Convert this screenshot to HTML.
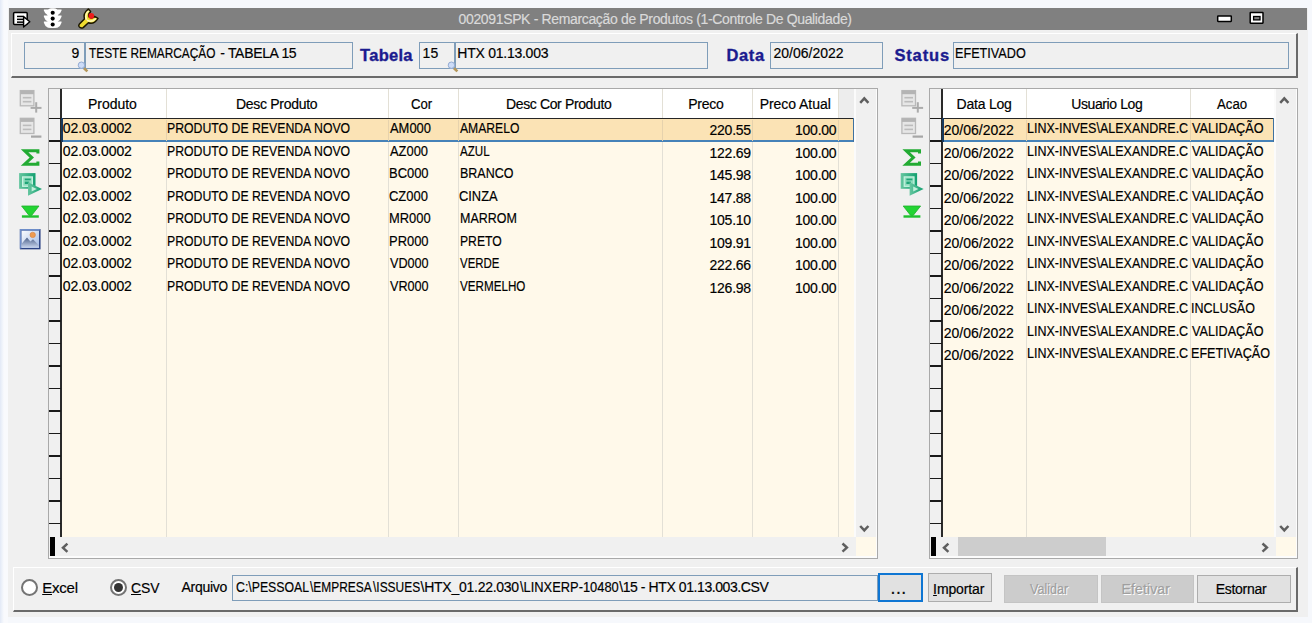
<!DOCTYPE html><html lang="pt-BR"><head><meta charset="utf-8"><title>002091SPK - Remarcação de Produtos</title><style>
*{box-sizing:border-box;margin:0;padding:0}
html,body{width:1312px;height:623px;overflow:hidden}
body{background:#f6f8fc;font-family:"Liberation Sans",sans-serif;font-size:14px;color:#000;position:relative}
.a{position:absolute}
.t{position:absolute;white-space:nowrap;line-height:16px;height:16px;-webkit-text-stroke:0.18px}
.b{font-weight:bold;color:#1b1b8f;-webkit-text-stroke:0.35px}
#edge{left:0;top:0;width:8px;height:623px;background:linear-gradient(90deg,#e2e9f6 0,#eef2fa 2px,#f9fafd 4px,#f9fafd 100%)}
#main{left:8px;top:8px;width:1300px;height:609px;background:#f0f0f0}
#tb{left:9px;top:8px;width:1298px;height:22px;background:#808080}
.panel{position:absolute;background:#f0f0f0;border-top:1px solid #fff;border-left:1px solid #fff;border-right:2px solid #6a6a6a;border-bottom:2px solid #6a6a6a}
.in{position:absolute;top:42px;height:27px;border:1px solid #7f9db9;background:#f0f0f0}
.grid{position:absolute;border:1px solid #a9a9a9;background:#fff9ea;overflow:hidden}
.hd{position:absolute;background:#fff}
.vl{position:absolute;width:1px;background:#e3e0d6}
.hl{position:absolute;height:1px;background:#1a1a1a}
.btn{position:absolute;top:574px;height:28px;border:1px solid #adadad;background:#e1e1e1}
</style></head><body>
<div class="a" id="edge"></div>
<div class="a" id="main"></div>
<div class="a" id="tb"></div>
<div class="panel" style="left:11px;top:33px;width:1287px;height:45px"></div>
<div class="in" style="left:24px;width:61px"></div>
<div class="in" style="left:85px;width:268px"></div>
<div class="in" style="left:419px;width:36px"></div>
<div class="in" style="left:455px;width:253px"></div>
<div class="in" style="left:770px;width:113px"></div>
<div class="in" style="left:953px;width:336px"></div>
<div class="grid" style="left:48px;top:88px;width:830px;height:471px">
<div class="hd" style="left:12px;top:0;width:777.5px;height:29.5px"></div>
<div class="a" style="left:789.5px;top:0;width:15.5px;height:29.5px;background:#ededed"></div>
<div class="a" style="left:0;top:0;width:12px;height:448.20000000000005px;background:#f0f0f0"></div>
<div class="a" style="left:10.6px;top:0;width:0.9px;height:448.20000000000005px;background:#b5b5b5"></div>
<div class="a" style="left:11.3px;top:0;width:1.7px;height:448.20000000000005px;background:#2a2a2a"></div>
<div class="vl" style="left:116.5px;top:0;height:448.20000000000005px"></div>
<div class="vl" style="left:339.0px;top:0;height:448.20000000000005px"></div>
<div class="vl" style="left:409.2px;top:0;height:448.20000000000005px"></div>
<div class="vl" style="left:613.0px;top:0;height:448.20000000000005px"></div>
<div class="vl" style="left:703.0px;top:0;height:448.20000000000005px"></div>
<div class="vl" style="left:789.0px;top:0;height:448.20000000000005px"></div>
<div class="a" style="left:12.2px;top:28.6px;width:792.8px;height:24.1px;background:#fbe3b5"></div>
<div class="a" style="left:12.2px;top:28.6px;width:792.8px;height:1.7px;background:#262626"></div>
<div class="a" style="left:12.2px;top:50.6px;width:792.8px;height:2.1px;background:#4682b8"></div>
<div class="a" style="left:803.7px;top:28.6px;width:1.3px;height:24.1px;background:#3f719f"></div>
<div class="a" style="left:12.2px;top:28.6px;width:2px;height:24.1px;background:#17395e"></div>
<div class="a" style="left:116.5px;top:30.5px;height:21.0px;width:1px;background:#e6d2ad"></div>
<div class="a" style="left:339.0px;top:30.5px;height:21.0px;width:1px;background:#e6d2ad"></div>
<div class="a" style="left:409.2px;top:30.5px;height:21.0px;width:1px;background:#e6d2ad"></div>
<div class="a" style="left:613.0px;top:30.5px;height:21.0px;width:1px;background:#e6d2ad"></div>
<div class="a" style="left:703.0px;top:30.5px;height:21.0px;width:1px;background:#e6d2ad"></div>
<div class="a" style="left:789.0px;top:30.5px;height:21.0px;width:1px;background:#e6d2ad"></div>
<div class="hl" style="left:0;top:28.8px;width:12px;height:1.6px"></div>
<div class="hl" style="left:0;top:51.3px;width:12px;height:1.6px"></div>
<div class="hl" style="left:0;top:73.8px;width:12px;height:1.6px"></div>
<div class="hl" style="left:0;top:96.3px;width:12px;height:1.6px"></div>
<div class="hl" style="left:0;top:118.8px;width:12px;height:1.6px"></div>
<div class="hl" style="left:0;top:141.3px;width:12px;height:1.6px"></div>
<div class="hl" style="left:0;top:163.8px;width:12px;height:1.6px"></div>
<div class="hl" style="left:0;top:186.3px;width:12px;height:1.6px"></div>
<div class="hl" style="left:0;top:208.8px;width:12px;height:1.6px"></div>
<div class="hl" style="left:0;top:231.3px;width:12px;height:1.6px"></div>
<div class="hl" style="left:0;top:253.8px;width:12px;height:1.6px"></div>
<div class="hl" style="left:0;top:276.3px;width:12px;height:1.6px"></div>
<div class="hl" style="left:0;top:298.8px;width:12px;height:1.6px"></div>
<div class="hl" style="left:0;top:321.3px;width:12px;height:1.6px"></div>
<div class="hl" style="left:0;top:343.8px;width:12px;height:1.6px"></div>
<div class="hl" style="left:0;top:366.3px;width:12px;height:1.6px"></div>
<div class="hl" style="left:0;top:388.8px;width:12px;height:1.6px"></div>
<div class="hl" style="left:0;top:411.3px;width:12px;height:1.6px"></div>
<div class="hl" style="left:0;top:433.8px;width:12px;height:1.6px"></div>
<div class="a" style="left:805px;top:0;width:1.5px;height:469px;background:#fbfbfb"></div>
<div class="a" style="left:806.5px;top:0;width:20px;height:448.20000000000005px;background:#f0f0f0"></div>
<div class="a" style="left:826.5px;top:0;width:3px;height:469px;background:#fcfcfc"></div>
<div class="a" style="left:0;top:448.20000000000005px;width:806.5px;height:19.2px;background:#f0f0f0"></div>
<div class="a" style="left:0;top:467.40000000000003px;width:828px;height:3px;background:#fcfcfc"></div>
<div class="a" style="left:1.3px;top:447.80000000000007px;width:4.9px;height:19.4px;background:#000"></div>
</div>
<div class="grid" style="left:929px;top:88px;width:369px;height:471px">
<div class="hd" style="left:12px;top:0;width:332px;height:29.5px"></div>
<div class="a" style="left:344px;top:0;width:0px;height:29.5px;background:#ededed"></div>
<div class="a" style="left:0;top:0;width:12px;height:448.20000000000005px;background:#f0f0f0"></div>
<div class="a" style="left:10.6px;top:0;width:0.9px;height:448.20000000000005px;background:#b5b5b5"></div>
<div class="a" style="left:11.3px;top:0;width:1.7px;height:448.20000000000005px;background:#2a2a2a"></div>
<div class="vl" style="left:95.70000000000005px;top:0;height:448.20000000000005px"></div>
<div class="vl" style="left:259.5px;top:0;height:448.20000000000005px"></div>
<div class="vl" style="left:343.5px;top:0;height:448.20000000000005px"></div>
<div class="a" style="left:12.2px;top:28.6px;width:331.8px;height:24.1px;background:#fbe3b5"></div>
<div class="a" style="left:12.2px;top:28.6px;width:331.8px;height:1.7px;background:#262626"></div>
<div class="a" style="left:12.2px;top:50.6px;width:331.8px;height:2.1px;background:#4682b8"></div>
<div class="a" style="left:342.7px;top:28.6px;width:1.3px;height:24.1px;background:#3f719f"></div>
<div class="a" style="left:12.2px;top:28.6px;width:2px;height:24.1px;background:#17395e"></div>
<div class="a" style="left:95.70000000000005px;top:30.5px;height:21.0px;width:1px;background:#e6d2ad"></div>
<div class="a" style="left:259.5px;top:30.5px;height:21.0px;width:1px;background:#e6d2ad"></div>
<div class="a" style="left:343.5px;top:30.5px;height:21.0px;width:1px;background:#e6d2ad"></div>
<div class="hl" style="left:0;top:28.8px;width:12px;height:1.6px"></div>
<div class="hl" style="left:0;top:51.3px;width:12px;height:1.6px"></div>
<div class="hl" style="left:0;top:73.8px;width:12px;height:1.6px"></div>
<div class="hl" style="left:0;top:96.3px;width:12px;height:1.6px"></div>
<div class="hl" style="left:0;top:118.8px;width:12px;height:1.6px"></div>
<div class="hl" style="left:0;top:141.3px;width:12px;height:1.6px"></div>
<div class="hl" style="left:0;top:163.8px;width:12px;height:1.6px"></div>
<div class="hl" style="left:0;top:186.3px;width:12px;height:1.6px"></div>
<div class="hl" style="left:0;top:208.8px;width:12px;height:1.6px"></div>
<div class="hl" style="left:0;top:231.3px;width:12px;height:1.6px"></div>
<div class="hl" style="left:0;top:253.8px;width:12px;height:1.6px"></div>
<div class="hl" style="left:0;top:276.3px;width:12px;height:1.6px"></div>
<div class="hl" style="left:0;top:298.8px;width:12px;height:1.6px"></div>
<div class="hl" style="left:0;top:321.3px;width:12px;height:1.6px"></div>
<div class="hl" style="left:0;top:343.8px;width:12px;height:1.6px"></div>
<div class="hl" style="left:0;top:366.3px;width:12px;height:1.6px"></div>
<div class="hl" style="left:0;top:388.8px;width:12px;height:1.6px"></div>
<div class="hl" style="left:0;top:411.3px;width:12px;height:1.6px"></div>
<div class="hl" style="left:0;top:433.8px;width:12px;height:1.6px"></div>
<div class="a" style="left:344px;top:0;width:1.5px;height:469px;background:#fbfbfb"></div>
<div class="a" style="left:345.5px;top:0;width:20px;height:448.20000000000005px;background:#f0f0f0"></div>
<div class="a" style="left:365.5px;top:0;width:3px;height:469px;background:#fcfcfc"></div>
<div class="a" style="left:0;top:448.20000000000005px;width:345.5px;height:19.2px;background:#f0f0f0"></div>
<div class="a" style="left:0;top:467.40000000000003px;width:367px;height:3px;background:#fcfcfc"></div>
<div class="a" style="left:1.3px;top:447.80000000000007px;width:4.9px;height:19.4px;background:#000"></div>
<div class="a" style="left:28px;top:448.20000000000005px;width:148px;height:19.2px;background:#cdcdcd"></div>
</div>
<div class="panel" style="left:13px;top:567px;width:1285px;height:45px"></div>
<div class="in" style="left:232px;top:575px;width:646px;height:26px"></div>
<div class="a" style="left:878px;top:573.4px;width:44.8px;height:28.4px;background:#e1e1e1;border:2.3px solid #0f76d3"></div>
<div class="a" style="left:928px;top:573.4px;width:63.8px;height:28.4px;background:#e1e1e1;border:1.2px solid #adadad"></div>
<div class="a" style="left:1004px;top:574.6px;width:93.6px;height:28.4px;background:#cccccc;border:1px solid #c4c4c4"></div>
<div class="a" style="left:1101px;top:574.6px;width:93.2px;height:28.4px;background:#cccccc;border:1px solid #c4c4c4"></div>
<div class="a" style="left:1197px;top:574.6px;width:93.6px;height:28.4px;background:#e1e1e1;border:1.2px solid #adadad"></div>
<div class="a" style="left:21.3px;top:579px;width:17px;height:17px;border-radius:50%;background:#fff;border:2px solid #747474"></div>
<div class="a" style="left:109.9px;top:579px;width:17px;height:17px;border-radius:50%;background:#fff;border:2px solid #747474"></div>
<div class="a" style="left:113.9px;top:583px;width:9px;height:9px;border-radius:50%;background:#333"></div>
<div class="t" style="left:458.50px;top:11.00px;color:#dadada;letter-spacing:-0.347px;">002091SPK - Remarcação de Produtos (1-Controle De Qualidade)</div>
<div class="t" style="left:71.50px;top:45.00px;letter-spacing:1.100px;">9</div>
<div class="t" style="left:0;top:45.00px;width:1312px;"><span class="a" style="left:88.50px;top:0;transform:scaleX(0.8463);transform-origin:0 0;">TESTE REMARCAÇÃO</span> <span class="a" style="left:220.30px;top:0;letter-spacing:-0.330px;">- TABELA 15</span></div>
<div class="t" style="left:422.60px;top:45.00px;letter-spacing:0.000px;">15</div>
<div class="t" style="left:457.30px;top:45.00px;letter-spacing:-0.250px;">HTX 01.13.003</div>
<div class="t" style="left:773.40px;top:45.00px;letter-spacing:0.022px;">20/06/2022</div>
<div class="t" style="left:955.40px;top:45.00px;transform:scaleX(0.9039);transform-origin:0 0;">EFETIVADO</div>
<div class="t b" style="left:360.00px;top:46.83px;letter-spacing:0.300px;font-size:16.5px;">Tabela</div>
<div class="t b" style="left:726.40px;top:46.83px;letter-spacing:0.667px;font-size:16.5px;">Data</div>
<div class="t b" style="left:894.40px;top:46.83px;letter-spacing:0.860px;font-size:16.5px;">Status</div>
<div class="t" style="left:88.00px;top:95.90px;letter-spacing:-0.033px;">Produto</div>
<div class="t" style="left:236.00px;top:95.90px;letter-spacing:-0.300px;">Desc Produto</div>
<div class="t" style="left:411.36px;top:95.90px;transform:scaleX(0.9409);transform-origin:0 0;">Cor</div>
<div class="t" style="left:506.00px;top:95.90px;letter-spacing:-0.367px;">Desc Cor Produto</div>
<div class="t" style="left:688.30px;top:95.90px;letter-spacing:-0.275px;">Preco</div>
<div class="t" style="left:759.70px;top:95.90px;letter-spacing:-0.050px;">Preco Atual</div>
<div class="t" style="left:956.60px;top:95.90px;letter-spacing:-0.229px;">Data Log</div>
<div class="t" style="left:1071.20px;top:95.90px;letter-spacing:-0.390px;">Usuario Log</div>
<div class="t" style="left:1216.50px;top:95.90px;transform:scaleX(0.9452);transform-origin:0 0;">Acao</div>
<div class="t" style="left:62.80px;top:120.00px;letter-spacing:-0.111px;">02.03.0002</div>
<div class="t" style="left:166.62px;top:120.00px;transform:scaleX(0.8763);transform-origin:0 0;">PRODUTO DE REVENDA NOVO</div>
<div class="t" style="left:390.30px;top:120.00px;transform:scaleX(0.9227);transform-origin:0 0;">AM000</div>
<div class="t" style="left:460.40px;top:120.00px;transform:scaleX(0.8676);transform-origin:0 0;">AMARELO</div>
<div class="t" style="right:561.25px;top:122.20px;letter-spacing:-0.28px;">220.55</div>
<div class="t" style="right:475.75px;top:122.20px;letter-spacing:-0.28px;">100.00</div>
<div class="t" style="left:62.80px;top:142.50px;letter-spacing:-0.111px;">02.03.0002</div>
<div class="t" style="left:166.62px;top:142.50px;transform:scaleX(0.8763);transform-origin:0 0;">PRODUTO DE REVENDA NOVO</div>
<div class="t" style="left:390.30px;top:142.50px;transform:scaleX(0.9220);transform-origin:0 0;">AZ000</div>
<div class="t" style="left:460.40px;top:142.50px;transform:scaleX(0.8278);transform-origin:0 0;">AZUL</div>
<div class="t" style="right:561.25px;top:144.70px;letter-spacing:-0.28px;">122.69</div>
<div class="t" style="right:475.75px;top:144.70px;letter-spacing:-0.28px;">100.00</div>
<div class="t" style="left:62.80px;top:165.00px;letter-spacing:-0.111px;">02.03.0002</div>
<div class="t" style="left:166.62px;top:165.00px;transform:scaleX(0.8763);transform-origin:0 0;">PRODUTO DE REVENDA NOVO</div>
<div class="t" style="left:389.38px;top:165.00px;transform:scaleX(0.9244);transform-origin:0 0;">BC000</div>
<div class="t" style="left:459.51px;top:165.00px;transform:scaleX(0.8914);transform-origin:0 0;">BRANCO</div>
<div class="t" style="right:561.25px;top:167.20px;letter-spacing:-0.28px;">145.98</div>
<div class="t" style="right:475.75px;top:167.20px;letter-spacing:-0.28px;">100.00</div>
<div class="t" style="left:62.80px;top:187.50px;letter-spacing:-0.111px;">02.03.0002</div>
<div class="t" style="left:166.62px;top:187.50px;transform:scaleX(0.8763);transform-origin:0 0;">PRODUTO DE REVENDA NOVO</div>
<div class="t" style="left:389.38px;top:187.50px;transform:scaleX(0.9244);transform-origin:0 0;">CZ000</div>
<div class="t" style="left:459.48px;top:187.50px;transform:scaleX(0.9195);transform-origin:0 0;">CINZA</div>
<div class="t" style="right:561.25px;top:189.70px;letter-spacing:-0.28px;">147.88</div>
<div class="t" style="right:475.75px;top:189.70px;letter-spacing:-0.28px;">100.00</div>
<div class="t" style="left:62.80px;top:210.00px;letter-spacing:-0.111px;">02.03.0002</div>
<div class="t" style="left:166.62px;top:210.00px;transform:scaleX(0.8763);transform-origin:0 0;">PRODUTO DE REVENDA NOVO</div>
<div class="t" style="left:389.38px;top:210.00px;transform:scaleX(0.9227);transform-origin:0 0;">MR000</div>
<div class="t" style="left:459.51px;top:210.00px;transform:scaleX(0.8903);transform-origin:0 0;">MARROM</div>
<div class="t" style="right:561.25px;top:212.20px;letter-spacing:-0.28px;">105.10</div>
<div class="t" style="right:475.75px;top:212.20px;letter-spacing:-0.28px;">100.00</div>
<div class="t" style="left:62.80px;top:232.50px;letter-spacing:-0.111px;">02.03.0002</div>
<div class="t" style="left:166.62px;top:232.50px;transform:scaleX(0.8763);transform-origin:0 0;">PRODUTO DE REVENDA NOVO</div>
<div class="t" style="left:389.38px;top:232.50px;transform:scaleX(0.9244);transform-origin:0 0;">PR000</div>
<div class="t" style="left:459.53px;top:232.50px;transform:scaleX(0.8696);transform-origin:0 0;">PRETO</div>
<div class="t" style="right:561.25px;top:234.70px;letter-spacing:-0.28px;">109.91</div>
<div class="t" style="right:475.75px;top:234.70px;letter-spacing:-0.28px;">100.00</div>
<div class="t" style="left:62.80px;top:255.00px;letter-spacing:-0.111px;">02.03.0002</div>
<div class="t" style="left:166.62px;top:255.00px;transform:scaleX(0.8763);transform-origin:0 0;">PRODUTO DE REVENDA NOVO</div>
<div class="t" style="left:390.30px;top:255.00px;transform:scaleX(0.9024);transform-origin:0 0;">VD000</div>
<div class="t" style="left:460.40px;top:255.00px;transform:scaleX(0.8167);transform-origin:0 0;">VERDE</div>
<div class="t" style="right:561.25px;top:257.20px;letter-spacing:-0.28px;">222.66</div>
<div class="t" style="right:475.75px;top:257.20px;letter-spacing:-0.28px;">100.00</div>
<div class="t" style="left:62.80px;top:277.50px;letter-spacing:-0.111px;">02.03.0002</div>
<div class="t" style="left:166.62px;top:277.50px;transform:scaleX(0.8763);transform-origin:0 0;">PRODUTO DE REVENDA NOVO</div>
<div class="t" style="left:390.30px;top:277.50px;transform:scaleX(0.9024);transform-origin:0 0;">VR000</div>
<div class="t" style="left:460.40px;top:277.50px;transform:scaleX(0.8321);transform-origin:0 0;">VERMELHO</div>
<div class="t" style="right:561.25px;top:279.70px;letter-spacing:-0.28px;">126.98</div>
<div class="t" style="right:475.75px;top:279.70px;letter-spacing:-0.28px;">100.00</div>
<div class="t" style="left:943.80px;top:122.20px;letter-spacing:-0.011px;">20/06/2022</div>
<div class="t" style="left:1026.91px;top:120.00px;transform:scaleX(0.8927);transform-origin:0 0;">LINX-INVES\ALEXANDRE.C</div>
<div class="t" style="left:1191.90px;top:120.00px;transform:scaleX(0.9038);transform-origin:0 0;">VALIDAÇÃO</div>
<div class="t" style="left:943.80px;top:144.70px;letter-spacing:-0.011px;">20/06/2022</div>
<div class="t" style="left:1026.91px;top:142.50px;transform:scaleX(0.8927);transform-origin:0 0;">LINX-INVES\ALEXANDRE.C</div>
<div class="t" style="left:1191.90px;top:142.50px;transform:scaleX(0.9038);transform-origin:0 0;">VALIDAÇÃO</div>
<div class="t" style="left:943.80px;top:167.20px;letter-spacing:-0.011px;">20/06/2022</div>
<div class="t" style="left:1026.91px;top:165.00px;transform:scaleX(0.8927);transform-origin:0 0;">LINX-INVES\ALEXANDRE.C</div>
<div class="t" style="left:1191.90px;top:165.00px;transform:scaleX(0.9038);transform-origin:0 0;">VALIDAÇÃO</div>
<div class="t" style="left:943.80px;top:189.70px;letter-spacing:-0.011px;">20/06/2022</div>
<div class="t" style="left:1026.91px;top:187.50px;transform:scaleX(0.8927);transform-origin:0 0;">LINX-INVES\ALEXANDRE.C</div>
<div class="t" style="left:1191.90px;top:187.50px;transform:scaleX(0.9038);transform-origin:0 0;">VALIDAÇÃO</div>
<div class="t" style="left:943.80px;top:212.20px;letter-spacing:-0.011px;">20/06/2022</div>
<div class="t" style="left:1026.91px;top:210.00px;transform:scaleX(0.8927);transform-origin:0 0;">LINX-INVES\ALEXANDRE.C</div>
<div class="t" style="left:1191.90px;top:210.00px;transform:scaleX(0.9038);transform-origin:0 0;">VALIDAÇÃO</div>
<div class="t" style="left:943.80px;top:234.70px;letter-spacing:-0.011px;">20/06/2022</div>
<div class="t" style="left:1026.91px;top:232.50px;transform:scaleX(0.8927);transform-origin:0 0;">LINX-INVES\ALEXANDRE.C</div>
<div class="t" style="left:1191.90px;top:232.50px;transform:scaleX(0.9038);transform-origin:0 0;">VALIDAÇÃO</div>
<div class="t" style="left:943.80px;top:257.20px;letter-spacing:-0.011px;">20/06/2022</div>
<div class="t" style="left:1026.91px;top:255.00px;transform:scaleX(0.8927);transform-origin:0 0;">LINX-INVES\ALEXANDRE.C</div>
<div class="t" style="left:1191.90px;top:255.00px;transform:scaleX(0.9038);transform-origin:0 0;">VALIDAÇÃO</div>
<div class="t" style="left:943.80px;top:279.70px;letter-spacing:-0.011px;">20/06/2022</div>
<div class="t" style="left:1026.91px;top:277.50px;transform:scaleX(0.8927);transform-origin:0 0;">LINX-INVES\ALEXANDRE.C</div>
<div class="t" style="left:1191.90px;top:277.50px;transform:scaleX(0.9038);transform-origin:0 0;">VALIDAÇÃO</div>
<div class="t" style="left:943.80px;top:302.20px;letter-spacing:-0.011px;">20/06/2022</div>
<div class="t" style="left:1026.91px;top:300.00px;transform:scaleX(0.8927);transform-origin:0 0;">LINX-INVES\ALEXANDRE.C</div>
<div class="t" style="left:1191.01px;top:300.00px;transform:scaleX(0.8929);transform-origin:0 0;">INCLUSÃO</div>
<div class="t" style="left:943.80px;top:324.70px;letter-spacing:-0.011px;">20/06/2022</div>
<div class="t" style="left:1026.91px;top:322.50px;transform:scaleX(0.8927);transform-origin:0 0;">LINX-INVES\ALEXANDRE.C</div>
<div class="t" style="left:1191.90px;top:322.50px;transform:scaleX(0.9038);transform-origin:0 0;">VALIDAÇÃO</div>
<div class="t" style="left:943.80px;top:347.20px;letter-spacing:-0.011px;">20/06/2022</div>
<div class="t" style="left:1026.91px;top:345.00px;transform:scaleX(0.8927);transform-origin:0 0;">LINX-INVES\ALEXANDRE.C</div>
<div class="t" style="left:1191.00px;top:345.00px;transform:scaleX(0.9012);transform-origin:0 0;">EFETIVAÇÃO</div>
<div class="t" style="left:42.20px;top:579.75px;letter-spacing:-0.200px;font-size:15px;"><u>E</u>xcel</div>
<div class="t" style="left:131.20px;top:579.75px;transform:scaleX(0.9290);transform-origin:0 0;font-size:15px;"><u>C</u>SV</div>
<div class="t" style="left:181.50px;top:578.70px;letter-spacing:-0.283px;">Arquivo</div>
<div class="t" style="left:0;top:578.70px;width:1312px;"><span class="a" style="left:235.72px;top:0;transform:scaleX(0.8780);transform-origin:0 0;">C:\PESSOAL</span><span class="a" style="left:310.40px;top:0;transform:scaleX(0.8528);transform-origin:0 0;">\EMPRESA</span><span class="a" style="left:373.20px;top:0;transform:scaleX(0.8527);transform-origin:0 0;">\ISSUES</span><span class="a" style="left:420.60px;top:0;letter-spacing:-0.262px;">\HTX_01.22.030</span><span class="a" style="left:520.00px;top:0;transform:scaleX(0.9196);transform-origin:0 0;">\LINXERP-10480</span><span class="a" style="left:619.20px;top:0;letter-spacing:-0.418px;">\15 - HTX 01.13.003.CSV</span></div>
<div class="t b" style="left:891.00px;top:580.60px;color:#111;-webkit-text-stroke:0;letter-spacing:1.500px;">...</div>
<div class="t" style="left:933.10px;top:580.70px;letter-spacing:-0.114px;"><u>I</u>mportar</div>
<div class="t" style="left:1030.40px;top:581.40px;color:#9f9f9f;text-shadow:1px 1px 0 #fff;transform:scaleX(0.8977);transform-origin:0 0;">Validar</div>
<div class="t" style="left:1121.60px;top:581.40px;color:#9f9f9f;text-shadow:1px 1px 0 #fff;letter-spacing:0.114px;">Efetivar</div>
<div class="t" style="left:1215.70px;top:581.40px;letter-spacing:-0.286px;">Estornar</div>
<svg class="a" style="left:0;top:0" width="1312" height="623" viewBox="0 0 1312 623"><defs><linearGradient id="dg" x1="0" y1="0" x2="1" y2="0"><stop offset="0" stop-color="#66c6a0"/><stop offset="1" stop-color="#12a070"/></linearGradient></defs>
<g transform="translate(0,0)">
<g transform="translate(0,0)">
<rect x="20.3" y="90.6" width="13.6" height="15.2" fill="#e6e6e6" stroke="#b9b9b9" stroke-width="1.3"/>
<rect x="20.3" y="90.6" width="13.6" height="3.6" fill="#b4b4b4"/>
<rect x="22.8" y="96.9" width="8.6" height="1.6" fill="#bcbcbc"/>
<rect x="22.8" y="100.9" width="8.6" height="1.6" fill="#bcbcbc"/>
<rect x="30.6" y="106.9" width="10.9" height="2" fill="#ababab"/>
<rect x="35.2" y="102.2" width="2" height="10.4" fill="#ababab"/>
</g>
<g transform="translate(0,27.7)">
<rect x="20.3" y="90.6" width="13.6" height="15.2" fill="#e6e6e6" stroke="#b9b9b9" stroke-width="1.3"/>
<rect x="20.3" y="90.6" width="13.6" height="3.6" fill="#b4b4b4"/>
<rect x="22.8" y="96.9" width="8.6" height="1.6" fill="#bcbcbc"/>
<rect x="22.8" y="100.9" width="8.6" height="1.6" fill="#bcbcbc"/>
<rect x="31" y="107.8" width="10.4" height="2.2" fill="#a6a6a6"/>
</g>
<polyline points="37.9,153.4 37.9,150.8 24.6,150.8 31.8,157.6 24.6,164.2 37.9,164.2 37.9,161.6" fill="none" stroke="#22ab33" stroke-width="3" stroke-linejoin="miter"/>
<rect x="19.1" y="173.1" width="16.4" height="15.7" fill="url(#dg)"/>
<rect x="22.6" y="176.9" width="9.8" height="9.4" fill="#8fdcbd" stroke="#c8f3e2" stroke-width="1.2"/>
<rect x="24.8" y="178.6" width="6" height="1.7" fill="#1fa477"/><rect x="24.8" y="181.6" width="4.4" height="2.4" fill="#1fa477"/>
<polygon points="28,182.3 42,189 28,195.7" fill="url(#dg)"/>
<polygon points="31.6,186.5 36.8,189 31.6,191.5" fill="#c0efdb"/>
<polygon points="21.6,206 39,206 31.6,215.4 29,215.4" fill="#22d433" stroke="#1fae2c" stroke-width="0.8"/>
<rect x="21.9" y="215.3" width="16.9" height="2.4" fill="#1fc02e"/>
</g>
<g transform="translate(881.6,0)">
<g transform="translate(0,0)">
<rect x="20.3" y="90.6" width="13.6" height="15.2" fill="#e6e6e6" stroke="#b9b9b9" stroke-width="1.3"/>
<rect x="20.3" y="90.6" width="13.6" height="3.6" fill="#b4b4b4"/>
<rect x="22.8" y="96.9" width="8.6" height="1.6" fill="#bcbcbc"/>
<rect x="22.8" y="100.9" width="8.6" height="1.6" fill="#bcbcbc"/>
<rect x="30.6" y="106.9" width="10.9" height="2" fill="#ababab"/>
<rect x="35.2" y="102.2" width="2" height="10.4" fill="#ababab"/>
</g>
<g transform="translate(0,27.7)">
<rect x="20.3" y="90.6" width="13.6" height="15.2" fill="#e6e6e6" stroke="#b9b9b9" stroke-width="1.3"/>
<rect x="20.3" y="90.6" width="13.6" height="3.6" fill="#b4b4b4"/>
<rect x="22.8" y="96.9" width="8.6" height="1.6" fill="#bcbcbc"/>
<rect x="22.8" y="100.9" width="8.6" height="1.6" fill="#bcbcbc"/>
<rect x="31" y="107.8" width="10.4" height="2.2" fill="#a6a6a6"/>
</g>
<polyline points="37.9,153.4 37.9,150.8 24.6,150.8 31.8,157.6 24.6,164.2 37.9,164.2 37.9,161.6" fill="none" stroke="#22ab33" stroke-width="3" stroke-linejoin="miter"/>
<rect x="19.1" y="173.1" width="16.4" height="15.7" fill="url(#dg)"/>
<rect x="22.6" y="176.9" width="9.8" height="9.4" fill="#8fdcbd" stroke="#c8f3e2" stroke-width="1.2"/>
<rect x="24.8" y="178.6" width="6" height="1.7" fill="#1fa477"/><rect x="24.8" y="181.6" width="4.4" height="2.4" fill="#1fa477"/>
<polygon points="28,182.3 42,189 28,195.7" fill="url(#dg)"/>
<polygon points="31.6,186.5 36.8,189 31.6,191.5" fill="#c0efdb"/>
<polygon points="21.6,206 39,206 31.6,215.4 29,215.4" fill="#22d433" stroke="#1fae2c" stroke-width="0.8"/>
<rect x="21.9" y="215.3" width="16.9" height="2.4" fill="#1fc02e"/>
</g>
<defs><linearGradient id="sky" x1="0" y1="0" x2="1" y2="1"><stop offset="0" stop-color="#ffffff"/><stop offset="1" stop-color="#9db7e4"/></linearGradient><linearGradient id="mnt" x1="0" y1="0" x2="0" y2="1"><stop offset="0" stop-color="#4d618a"/><stop offset="1" stop-color="#c9d6ee"/></linearGradient></defs>
<rect x="20.6" y="229.8" width="19.2" height="18.8" fill="url(#sky)" stroke="#2c4383" stroke-width="1.5"/>
<polyline points="20.6,248.6 20.6,229.8 39.8,229.8" fill="none" stroke="#6d8dc9" stroke-width="1.5"/>
<polygon points="21.4,244 27,237.6 30.4,241.4 33,239.2 39,245.4 39,247.8 21.4,247.8" fill="url(#mnt)"/>
<circle cx="32.7" cy="234.9" r="2.7" fill="#ee9a50" stroke="#d9803a" stroke-width="0.6"/>
<rect x="13.6" y="12.6" width="13.6" height="12" rx="1" fill="#fff" stroke="#000" stroke-width="1.5"/>
<rect x="17" y="15.7" width="7" height="1.5" fill="#000"/><rect x="17" y="18.6" width="6" height="1.5" fill="#000"/><rect x="17" y="21.4" width="6" height="1.5" fill="#000"/>
<polygon points="23.6,16.6 29.8,21.8 23.6,27" fill="#fff" stroke="#000" stroke-width="1.4" stroke-linejoin="round"/>
<path d="M43.9,9.4 L61.5,9.4 L61.5,10.6 Q60.6,14.0 57.4,15.600000000000001 L48,15.600000000000001 Q44.8,14.0 43.9,10.6 Z" fill="#fff"/><path d="M43.9,15.5 L61.5,15.5 L61.5,16.7 Q60.6,20.1 57.4,21.7 L48,21.7 Q44.8,20.1 43.9,16.7 Z" fill="#fff"/><path d="M43.9,21.6 L61.5,21.6 L61.5,22.8 Q60.6,26.200000000000003 57.4,27.8 L48,27.8 Q44.8,26.200000000000003 43.9,22.8 Z" fill="#fff"/>
<rect x="47.6" y="8.2" width="10.2" height="19.8" rx="4" fill="#fff"/>
<circle cx="52.7" cy="12.7" r="2.05" fill="#000"/>
<circle cx="52.7" cy="18.6" r="2.05" fill="#000"/>
<circle cx="52.7" cy="24.5" r="2.05" fill="#000"/>
<path d="M79.4,24 L84.4,19 Q82.8,13.4 88.3,9 L90.6,11.6 Q88,14 88.9,16.8 Q91.4,19.2 94.6,16.4 L98,18.4 Q93.8,25 88.4,22.8 L83.2,27.6 Q80.6,28.8 79.1,26.6 Q78.3,25.2 79.4,24 Z" fill="#f0dc30" stroke="#1a1500" stroke-width="1.5" stroke-linejoin="round"/>
<path d="M86.2,19 Q84.8,14.4 88.4,11.2 M87.6,20.4 Q91.6,22.4 95.6,18.8" fill="none" stroke="#fff8b4" stroke-width="1.7" stroke-linecap="round"/>
<circle cx="91.3" cy="15.9" r="2.8" fill="#ee1c1c"/>
<rect x="1217.7" y="16" width="13.6" height="5.5" rx="0.4" fill="#fff" stroke="#000" stroke-width="1.5"/>
<rect x="1250.2" y="12.6" width="12.8" height="10.6" rx="0.4" fill="#fff" stroke="#000" stroke-width="1.5"/>
<rect x="1253.6" y="16.5" width="6.4" height="3.4" fill="#808080" stroke="#000" stroke-width="1.3"/>
<line x1="84.0" y1="68.2" x2="87.4" y2="71.4" stroke="#b5975a" stroke-width="2.6"/>
<circle cx="81.4" cy="65.2" r="3.2" fill="#cddcf7" stroke="#93abd3" stroke-width="1"/>
<line x1="454.0" y1="68.2" x2="457.4" y2="71.4" stroke="#b5975a" stroke-width="2.6"/>
<circle cx="451.4" cy="65.2" r="3.2" fill="#cddcf7" stroke="#93abd3" stroke-width="1"/><polyline points="860.1999999999999,102.8 864.3,98.39999999999999 868.4,102.8" fill="none" stroke="#5f5f5f" stroke-width="2.5" stroke-linejoin="miter"/>
<polyline points="860.1999999999999,526.0 864.3,530.4000000000001 868.4,526.0" fill="none" stroke="#5f5f5f" stroke-width="2.5" stroke-linejoin="miter"/>
<polyline points="67.4,543.6999999999999 63.0,547.8 67.4,551.9" fill="none" stroke="#5f5f5f" stroke-width="2.5" stroke-linejoin="miter"/>
<polyline points="842.5,543.5 846.9000000000001,547.6 842.5,551.7" fill="none" stroke="#5f5f5f" stroke-width="2.5" stroke-linejoin="miter"/>
<polyline points="1280.2,102.8 1284.3,98.39999999999999 1288.3999999999999,102.8" fill="none" stroke="#5f5f5f" stroke-width="2.5" stroke-linejoin="miter"/>
<polyline points="1280.2,526.0 1284.3,530.4000000000001 1288.3999999999999,526.0" fill="none" stroke="#5f5f5f" stroke-width="2.5" stroke-linejoin="miter"/>
<polyline points="948.4000000000001,543.6999999999999 944.0,547.8 948.4000000000001,551.9" fill="none" stroke="#5f5f5f" stroke-width="2.5" stroke-linejoin="miter"/>
<polyline points="1262.5,543.5 1266.9,547.6 1262.5,551.7" fill="none" stroke="#5f5f5f" stroke-width="2.5" stroke-linejoin="miter"/></svg>
</body></html>
